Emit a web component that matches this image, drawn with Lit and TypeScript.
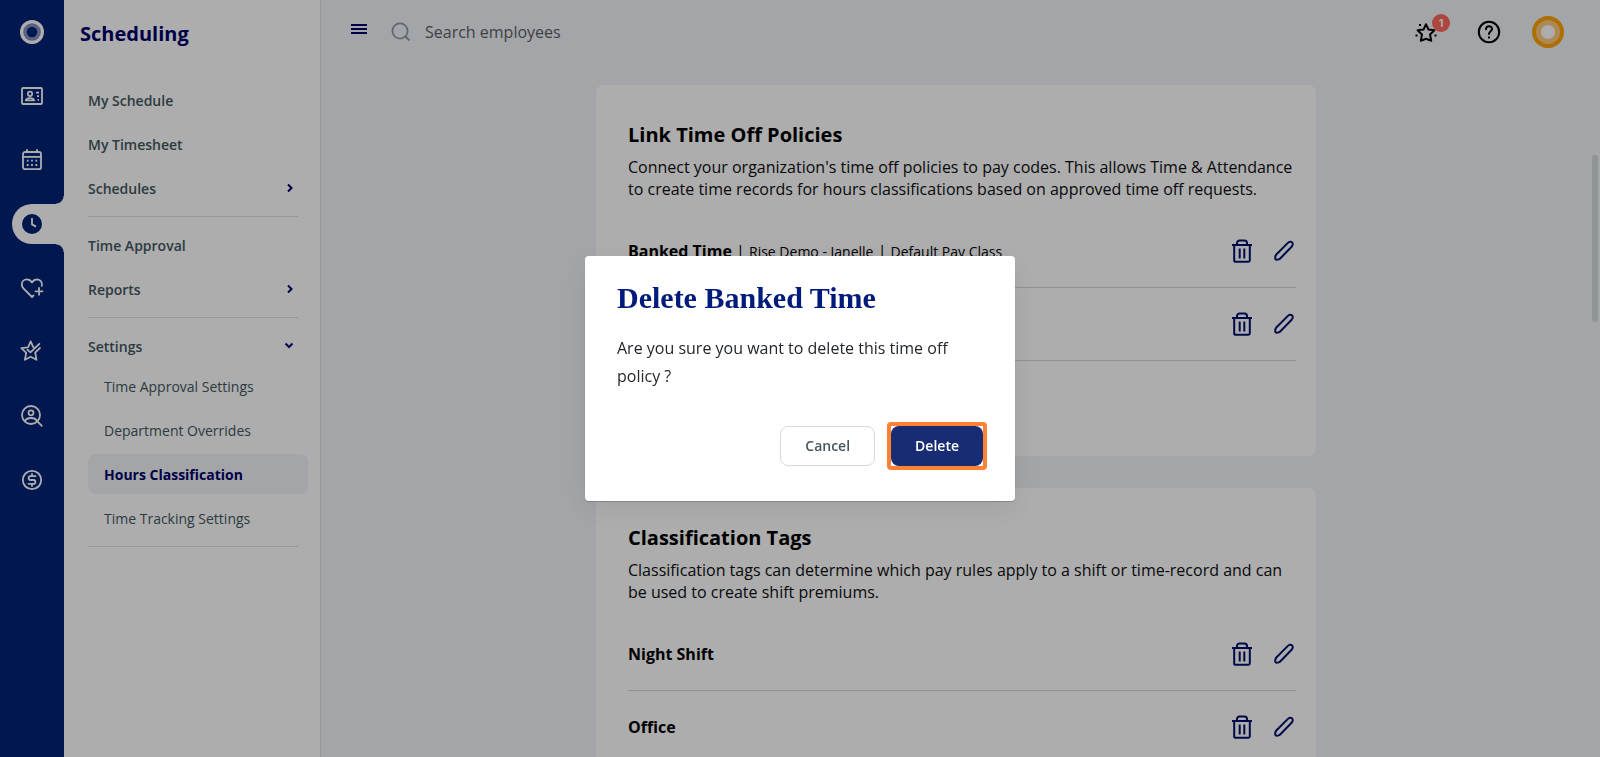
import { LitElement, html, css, svg, nothing } from "lit";
import { customElement } from "lit/decorators.js";
import { classMap } from "lit/directives/class-map.js";

const FONT = css`"Open Sans", "Noto Sans", sans-serif`;

const stroked = (body: unknown, size = 24, width = 1.8) => html`
  <svg width=${size} height=${size} viewBox="0 0 24 24" fill="none" stroke="currentColor"
    stroke-width=${width} stroke-linecap="round" stroke-linejoin="round" aria-hidden="true">${body}</svg>`;

const icons = {
  logo: html`<svg width="24" height="24" viewBox="0 0 24 24" aria-hidden="true">
    <circle cx="12" cy="12" r="12" fill="#fff"/><circle cx="12" cy="12" r="8.8" fill="#7f92c4"/>
    <circle cx="12" cy="12" r="5.2" fill="#002376"/></svg>`,
  people: stroked(svg`<rect x="2" y="4" width="20" height="16" rx="1"/><circle cx="10" cy="9.8" r="2.2"/>
    <path d="M5.8 16.4c.3-1.500 2-2.200 4.200-2.200s3.900.7 4.200 2.200z"/>
    <path d="M16 8.600h3M17 12.200h2M17.600 15.800h1.400" stroke-linecap="butt"/>`),
  calendar: stroked(svg`<rect x="3" y="4" width="18" height="17.2" rx="2"/><path d="M3 8.800h18M7 2v2M17 2v2"/>
    <path d="M6.800 12.700h1.800M11.100 12.700h1.800M15.400 12.700h1.800M6.800 17h1.800M11.100 17h1.800M15.400 17h1.800" stroke-linecap="butt"/>`),
  clock: html`<svg width="24" height="24" viewBox="0 0 24 24" aria-hidden="true">
    <circle cx="12" cy="12" r="10" fill="currentColor"/>
    <path d="M12 6v6.400l4 2.200" fill="none" stroke="#fff" stroke-width="1.8"/></svg>`,
  heart: stroked(svg`<path d="M13.500 19.500 12 21l-8.600-8.700a5.400 5.400 0 0 1-1.600-4 5 5 0 0 1 5-4.900c2.200 0 4 1.100 5.200 3 1.200-1.900 3-3 5.200-3a5 5 0 0 1 4.600 6.500"/>
    <path d="M19 11.800v7M15.500 15.300h7"/>`),
  star: stroked(svg`<g transform="translate(-0.3 -1.2)"><path d="m14.200 8.600-.8-.6L11 2.600 8.300 8.600l-6.600.7 4.800 4.700L5.200 21l5.800-3.100 5.800 3.100-1.300-7.200 4.800-4.700"/>
    <path d="m7.700 11 3 2.600 9-8.600"/></g>`),
  talent: stroked(svg`<circle cx="11" cy="11" r="9"/><circle cx="11" cy="8.8" r="2.5"/>
    <path d="M5 17.300c.6-2.200 2.800-3.300 6-3.300s5.400 1.100 6 3.300M17.600 17.600l4.200 4.200"/>`),
  dollar: stroked(svg`<circle cx="12" cy="12" r="9.200"/>
    <path d="M15.500 8.200h-5a1.900 1.900 0 0 0 0 3.800h3a1.900 1.900 0 0 1 0 3.800h-5M12 6v2M12 16v2"/>`),
  right: html`<svg width="8" height="10" viewBox="0 0 8 10" fill="none" stroke="currentColor" stroke-width="2" aria-hidden="true"><path d="m2 1.500 3.500 3.500-3.500 3.500"/></svg>`,
  down: html`<svg width="10" height="8" viewBox="0 0 10 8" fill="none" stroke="currentColor" stroke-width="2" aria-hidden="true"><path d="m1.500 1.500 3.500 3.500 3.500-3.500"/></svg>`,
  menu: html`<svg width="16" height="10" viewBox="0 0 16 10" fill="currentColor" aria-hidden="true"><path d="M0 0h16v2H0zM0 4h16v2H0zM0 8h16v2H0z"/></svg>`,
  search: html`<svg width="20" height="20" viewBox="0 0 20 20" fill="none" stroke="currentColor" stroke-width="1.8" aria-hidden="true"><circle cx="9" cy="9" r="7.6"/><path d="m14.500 14.500 4 4" stroke-width="2.2"/></svg>`,
  sparkle: stroked(svg`<path d="m12 4.200 2.500 5.400 5.900.7-4.400 4.100 1.200 6.300-5.200-1.900-5.200 1.900 1.200-6.300-4.400-4.100 5.900-.7z"/>
    <path d="M5 5h2M1.500 15.500h2M20.500 15.500h2" stroke-linecap="butt"/>`, 24, 2),
  help: stroked(svg`<circle cx="12" cy="12" r="10.2"/><path d="M9 9.200c0-1.900 1.300-3 3-3s3 1.100 3 2.800c0 2.200-3 2.300-3 5"/>
    <path d="M11 17.500h2" stroke-linecap="butt"/>`, 24, 2),
  avatar: html`<svg width="32" height="32" viewBox="0 0 32 32" aria-hidden="true">
    <circle cx="16" cy="16" r="16" fill="#ffa400"/><circle cx="16" cy="16" r="12" fill="#ffcb80"/>
    <circle cx="16" cy="16" r="7" fill="#fff"/></svg>`,
  trash: stroked(svg`<path d="M2 6h20" stroke-linecap="butt"/><path d="M7 5.500V4a2.500 2.500 0 0 1 2.500-2.500h5A2.500 2.500 0 0 1 17 4v1.500"/>
    <path d="M4.200 6v15.200a1.600 1.600 0 0 0 1.600 1.600h12.400a1.600 1.600 0 0 0 1.600-1.600V6"/><path d="M9.700 9.500v10M14.300 9.500v10" stroke-linecap="butt"/>`, 24, 2),
  pencil: stroked(svg`<path d="M3.600 20.400c-.9-.9-.2-3.900.7-4.900L15.900 3.900c1.300-1.300 3.200-1.500 4.200-.5s.8 3-.5 4.300L8.200 19.500c-1 1-3.800 1.700-4.600.9z"/>`, 24, 2),
};

type NavItem = { label: string; arrow?: "right" | "down"; sub?: boolean; active?: boolean };

const navGroups: NavItem[][] = [
  [{ label: "My Schedule" }, { label: "My Timesheet" }, { label: "Schedules", arrow: "right" }],
  [{ label: "Time Approval" }, { label: "Reports", arrow: "right" }],
  [
    { label: "Settings", arrow: "down" },
    { label: "Time Approval Settings", sub: true },
    { label: "Department Overrides", sub: true },
    { label: "Hours Classification", sub: true, active: true },
    { label: "Time Tracking Settings", sub: true },
  ],
];

@customElement("app-rail")
class AppRail extends LitElement {
  static styles = css`
    :host { display: block; flex: none; width: 64px; background: #002376; color: #fff; }
    .rail { display: flex; flex-direction: column; }
    .link { display: flex; align-items: center; justify-content: center; height: 64px; color: inherit; }
    .link.active { color: #002376; position: relative; }
    .tab {
      display: flex; align-items: center; justify-content: center;
      width: 40px; height: 40px; margin-left: 12px; padding-right: 12px;
      background: #fff; border-radius: 20px 0 0 20px;
    }
    .tab::before, .tab::after {
      content: ""; position: absolute; right: 0; width: 8px; height: 8px;
    }
    .tab::before { top: 4px; background: radial-gradient(circle at 0 0, #002376 7px, #fff 8px); }
    .tab::after { bottom: 4px; background: radial-gradient(circle at 0 100%, #002376 7px, #fff 8px); }
  `;
  render() {
    const link = (name: string, icon: unknown) => html`<a class="link" href="#" aria-label=${name}>${icon}</a>`;
    return html`<nav class="rail" aria-label="Main">
      ${link("Home", icons.logo)}${link("People", icons.people)}${link("Calendar", icons.calendar)}
      <a class="link active" href="#" aria-label="Scheduling"><span class="tab">${icons.clock}</span></a>
      ${link("Benefits", icons.heart)}${link("Performance", icons.star)}${link("Talent", icons.talent)}
      ${link("Payroll", icons.dollar)}
    </nav>`;
  }
}

@customElement("app-sidebar")
class AppSidebar extends LitElement {
  static styles = css`
    :host { display: block; flex: none; width: 256px; background: #fff; border-right: 1px solid #dcdfe3; font-family: ${FONT}; }
    .title { margin: 0; padding: 4px 16px 0; font-size: 20px; line-height: 60px; font-weight: 700; color: #00006b; }
    .groups { padding: 16px 12px 0 24px; }
    .group { display: flex; flex-direction: column; gap: 4px; margin: 0; padding: 0; list-style: none; }
    .group::after { content: ""; height: 1px; margin: 4px 10px 8px 0; background: #dcdfe3; }
    .link {
      display: flex; align-items: center; justify-content: space-between; height: 40px;
      padding-right: 14px; border-radius: 8px; box-sizing: border-box;
      font-size: 14px; font-weight: 600; color: #42575f; text-decoration: none;
    }
    .link svg { color: #00006b; }
    .down { margin-bottom: -4px; }
    .sub { padding-left: 16px; font-weight: 400; }
    .sub.active { background: #f1f3f9; color: #00006b; font-weight: 700; }
  `;
  render() {
    return html`
      <h1 class="title">Scheduling</h1>
      <nav class="groups" aria-label="Scheduling">
        ${navGroups.map(
          (group) => html`<ul class="group">
            ${group.map(
              (item) => html`<li class=${item.arrow ?? "plain"}>
                <a href="#" class=${classMap({ link: true, sub: !!item.sub, active: !!item.active })}>
                  <span>${item.label}</span>${item.arrow ? icons[item.arrow] : nothing}
                </a>
              </li>`
            )}
          </ul>`
        )}
      </nav>`;
  }
}

@customElement("app-topbar")
class AppTopbar extends LitElement {
  static styles = css`
    :host { display: flex; align-items: center; height: 64px; padding: 0 36px 0 30px; font-family: ${FONT}; }
    button { display: flex; padding: 0; border: 0; background: none; color: #000; }
    .menu { color: #00006b; margin-bottom: 6px; }
    .search { display: flex; flex: 1; align-items: center; gap: 14px; margin-left: 24px; color: #8d9ea6; }
    input { flex: 1; min-width: 0; padding: 0; border: 0; outline: 0; background: none; font: 400 16px/24px ${FONT}; color: #5c6262; }
    input::placeholder { color: #5c6262; opacity: 1; }
    .actions { display: flex; align-items: center; gap: 39px; }
    .notify { position: relative; }
    .badge {
      position: absolute; left: 18px; top: -6px; width: 18px; height: 18px; border-radius: 50%;
      background: #ff675d; color: #fff; font: 700 11px/18px Inter, sans-serif; text-align: center;
    }
    .avatar { margin-left: -8px; }
  `;
  render() {
    return html`
      <button class="menu" aria-label="Toggle menu">${icons.menu}</button>
      <label class="search">${icons.search}<input type="text" aria-label="Search employees" placeholder="Search employees" /></label>
      <div class="actions">
        <button class="notify" aria-label="What's new">${icons.sparkle}<span class="badge">1</span></button>
        <button aria-label="Help">${icons.help}</button>
        <button class="avatar" aria-label="Account">${icons.avatar}</button>
      </div>`;
  }
}

type Policy = { name: string; details: string[] };

@customElement("policy-card")
class PolicyCard extends LitElement {
  static properties = { heading: {}, description: {}, rows: { attribute: false } };
  declare heading: string;
  declare description: string;
  declare rows: Policy[];
  static styles = css`
    :host { display: block; padding: 32px 20px 95px 32px; border-radius: 8px; background: #fff; font-family: ${FONT}; color: #000; }
    .heading { margin: 0; font-size: 20px; line-height: 36px; font-weight: 700; }
    .text { margin: 3px 0 15px; font-size: 16px; line-height: 22px; color: #0c0e12; }
    .rows { margin: 0; padding: 0; list-style: none; }
    .row { display: flex; align-items: center; gap: 18px; height: 72px; border-bottom: 1px solid #d4d6da; }
    .label { flex: 1; font-size: 16px; }
    .name { font-weight: 700; }
    .detail { font-size: 14px; }
    button { display: flex; padding: 0; border: 0; background: none; color: #00106b; }
  `;
  render() {
    return html`
      <h2 class="heading">${this.heading}</h2>
      <p class="text">${this.description}</p>
      <ul class="rows">
        ${this.rows.map(
          (row) => html`<li class="row">
            <span class="label"><span class="name">${row.name}</span>${row.details.map((d) => html` | <span class="detail">${d}</span>`)}</span>
            <button aria-label="Delete">${icons.trash}</button>
            <button aria-label="Edit">${icons.pencil}</button>
          </li>`
        )}
      </ul>`;
  }
}

@customElement("confirm-dialog")
class ConfirmDialog extends LitElement {
  static styles = css`
    :host {
      position: fixed; inset: 0; display: flex; align-items: center; justify-content: center;
      background: rgba(0, 0, 0, 0.32); font-family: ${FONT};
    }
    .dialog {
      width: 430px; max-width: 90vw; box-sizing: border-box; padding: 24px 32px 35px; border-radius: 4px; background: #fff;
      box-shadow: 0 1px 1px rgba(0, 0, 0, 0.2), 0 8px 32px rgba(0, 0, 0, 0.08);
    }
    .title { margin: 0; font: 700 30px/36px "Source Serif Pro", "Liberation Serif", serif; color: #001b7c; }
    .message { margin: 18px 0 36px; font-size: 16px; line-height: 28px; color: #23272b; }
    .buttons { display: flex; justify-content: flex-end; align-items: center; gap: 16px; }
    button { height: 40px; padding: 0 24px; border: 0; border-radius: 8px; font: 600 14px/20px ${FONT}; }
    .cancel { border: 1px solid #d6d8dc; background: #fff; color: #46565f; }
    .delete { display: block; background: #182c74; color: #fff; }
    .ring { margin: -4px; border: 4px solid #ff8133; border-radius: 4px; }
  `;
  render() {
    return html`<div class="dialog" role="dialog" aria-modal="true" aria-labelledby="title">
      <h2 class="title" id="title">Delete Banked Time</h2>
      <p class="message">Are you sure you want to delete this time off policy ?</p>
      <div class="buttons">
        <button class="cancel">Cancel</button>
        <div class="ring"><button class="delete">Delete</button></div>
      </div>
    </div>`;
  }
}

@customElement("app-root")
class AppRoot extends LitElement {
  static styles = css`
    :host { display: flex; height: 100vh; overflow: hidden; background: #f1f3f9; }
    .page { flex: 1; min-width: 0; display: flex; flex-direction: column; }
    .body { flex: 1; min-height: 0; display: flex; }
    .content { flex: 1; min-width: 0; overflow: hidden; padding: 21px 24px 0; }
    .cards { display: flex; flex-direction: column; gap: 32px; max-width: 720px; margin: 0 auto; }
    .scroll { flex: none; padding: 91px 2px 0 1px; }
    .thumb { width: 6px; height: 167px; border-radius: 3px; background: #d3dade; }
  `;
  render() {
    return html`
      <app-rail></app-rail>
      <app-sidebar></app-sidebar>
      <div class="page">
        <app-topbar></app-topbar>
        <div class="body">
          <main class="content">
            <div class="cards">
              <policy-card
                heading="Link Time Off Policies"
                description="Connect your organization's time off policies to pay codes. This allows Time &amp; Attendance to create time records for hours classifications based on approved time off requests."
                .rows=${[{ name: "Banked Time", details: ["Rise Demo - Janelle", "Default Pay Class"] }, { name: "", details: [] }]}
              ></policy-card>
              <policy-card
                heading="Classification Tags"
                description="Classification tags can determine which pay rules apply to a shift or time-record and can be used to create shift premiums."
                .rows=${[{ name: "Night Shift", details: [] }, { name: "Office", details: [] }]}
              ></policy-card>
            </div>
          </main>
          <div class="scroll"><div class="thumb"></div></div>
        </div>
      </div>
      <confirm-dialog></confirm-dialog>`;
  }
}
